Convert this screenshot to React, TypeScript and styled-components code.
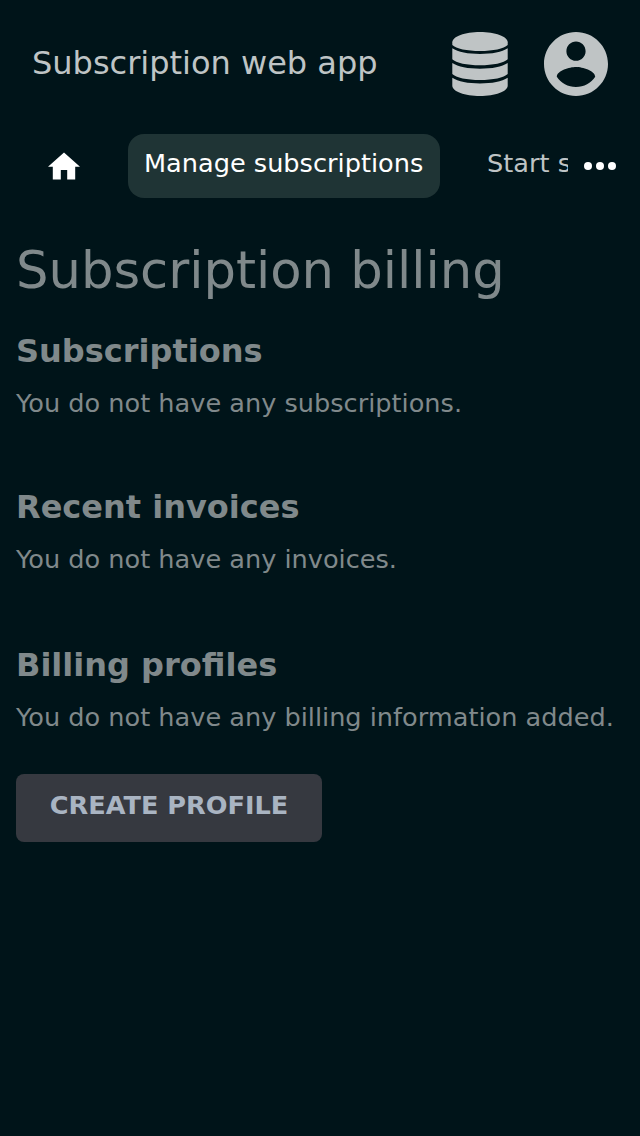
import React from 'react';
import styled, { createGlobalStyle } from 'styled-components';

const GlobalStyle = createGlobalStyle`
  * { box-sizing: border-box; }
  body {
    margin: 0;
    background: #001419;
    font-family: 'DejaVu Sans', sans-serif;
    color: #80898b;
  }
`;

const Page = styled.div`
  min-height: 1136px;
  overflow: hidden;
`;

const Header = styled.header`
  display: flex;
  align-items: center;
  height: 128px;
  padding: 0 32px;
`;

const AppTitle = styled.div`
  flex: 1;
  font-size: 32px;
  line-height: 38px;
  padding-bottom: 2px;
  color: #bfc4c5;
  white-space: nowrap;
`;

const HeaderIcons = styled.div`
  display: flex;
  gap: 36px;
  color: #bfc4c5;
`;

const Icon = styled.svg`
  display: block;
  flex: none;
  fill: currentColor;
`;

const Nav = styled.nav`
  display: flex;
  height: 76px;
  padding: 6px 24px 6px 32px;
  color: #fff;
`;

const HomeLink = styled.a`
  display: flex;
  padding: 16px;
  width: 64px;
  margin-right: 32px;
`;

const Tabs = styled.div`
  flex: none;
  display: flex;
  width: 440px;
  gap: 31px;
  overflow: hidden;
`;

const Tab = styled.a<{ $active?: boolean }>`
  flex: none;
  min-width: 312px;
  height: 64px;
  padding: 14px 16px;
  border-radius: 16px;
  font-size: 25.6px;
  line-height: 30px;
  white-space: nowrap;
  background: ${p => (p.$active ? '#1f3435' : 'transparent')};
  color: ${p => (p.$active ? '#fff' : '#bfc4c5')};
`;

const More = styled.div`
  padding: 16px 0 0 16px;
`;

const Content = styled.main`
  padding: 0 16px;
`;

const Heading = styled.h1`
  margin: 36px 0 32px;
  font-size: 51.2px;
  line-height: 60px;
  font-weight: 400;
`;

const Section = styled.section<{ $gap?: number }>`
  margin-bottom: ${p => p.$gap ?? 0}px;
`;

const SectionTitle = styled.h2`
  margin: 0 0 18px;
  font-size: 32px;
  line-height: 38px;
  font-weight: 700;
`;

const Text = styled.p`
  margin: 0;
  font-size: 25.6px;
  line-height: 30px;
  white-space: nowrap;
`;

const Button = styled.button`
  display: block;
  width: 306px;
  height: 68px;
  margin-top: 42px;
  padding: 0 0 6px;
  border: 0;
  border-radius: 8px;
  background: #363940;
  color: #a9b4c2;
  font: 700 25.6px/30px 'DejaVu Sans', sans-serif;
`;

export default function App() {
  return (
    <Page>
      <GlobalStyle />
      <Header>
        <AppTitle>Subscription web app</AppTitle>
        <HeaderIcons>
          <Icon width="56" height="64" viewBox="0 0 56 64">
            <path d="M28 0C43 0 55.700 4.500 55.700 10.300V13C52 16.800 41 19 28 19S4 16.800.300 13V10.300C.300 4.500 13 0 28 0z" />
            <path d="M.300 16.300C6 20.200 16 22 28 22s22-1.800 27.700-5.700v11C52 31 41 33.300 28 33.300S4 31 .300 27.300z" />
            <path d="M.300 31C6 34.900 16 36.700 28 36.700s22-1.800 27.700-5.700v11C52 45.700 41 48 28 48S4 45.700.300 42z" />
            <path d="M.300 45.700C6 49.600 16 51.400 28 51.400s22-1.800 27.700-5.700v8C55.700 59.500 43 64 28 64S.300 59.500.300 53.700z" />
          </Icon>
          <Icon width="64" height="64" viewBox="2 2 20 20">
            <path d="M12 2C6.480 2 2 6.480 2 12s4.480 10 10 10 10-4.480 10-10S17.520 2 12 2zm0 3c1.660 0 3 1.340 3 3s-1.340 3-3 3-3-1.340-3-3 1.340-3 3-3zm0 14.200c-2.500 0-4.710-1.280-6-3.220.030-1.990 4-3.080 6-3.080 1.990 0 5.970 1.090 6 3.080-1.290 1.940-3.500 3.220-6 3.220z" />
          </Icon>
        </HeaderIcons>
      </Header>
      <Nav>
        <HomeLink>
          <Icon width="32" height="32" viewBox="2 1.500 20 20">
            <path d="M10 20v-6h4v6h5v-8h3L12 3 2 12h3v8z" />
          </Icon>
        </HomeLink>
        <Tabs>
          <Tab $active>Manage subscriptions</Tab>
          <Tab>Start subscription</Tab>
        </Tabs>
        <More>
          <Icon width="32" height="32" viewBox="0 0 32 32">
            <circle cx="4" cy="16" r="4" />
            <circle cx="16" cy="16" r="4" />
            <circle cx="28" cy="16" r="4" />
          </Icon>
        </More>
      </Nav>
      <Content>
        <Heading>Subscription billing</Heading>
        <Section $gap={70}>
          <SectionTitle>Subscriptions</SectionTitle>
          <Text>You do not have any subscriptions.</Text>
        </Section>
        <Section $gap={72}>
          <SectionTitle>Recent invoices</SectionTitle>
          <Text>You do not have any invoices.</Text>
        </Section>
        <Section>
          <SectionTitle>Billing profiles</SectionTitle>
          <Text>You do not have any billing information added.</Text>
          <Button>CREATE PROFILE</Button>
        </Section>
      </Content>
    </Page>
  );
}
